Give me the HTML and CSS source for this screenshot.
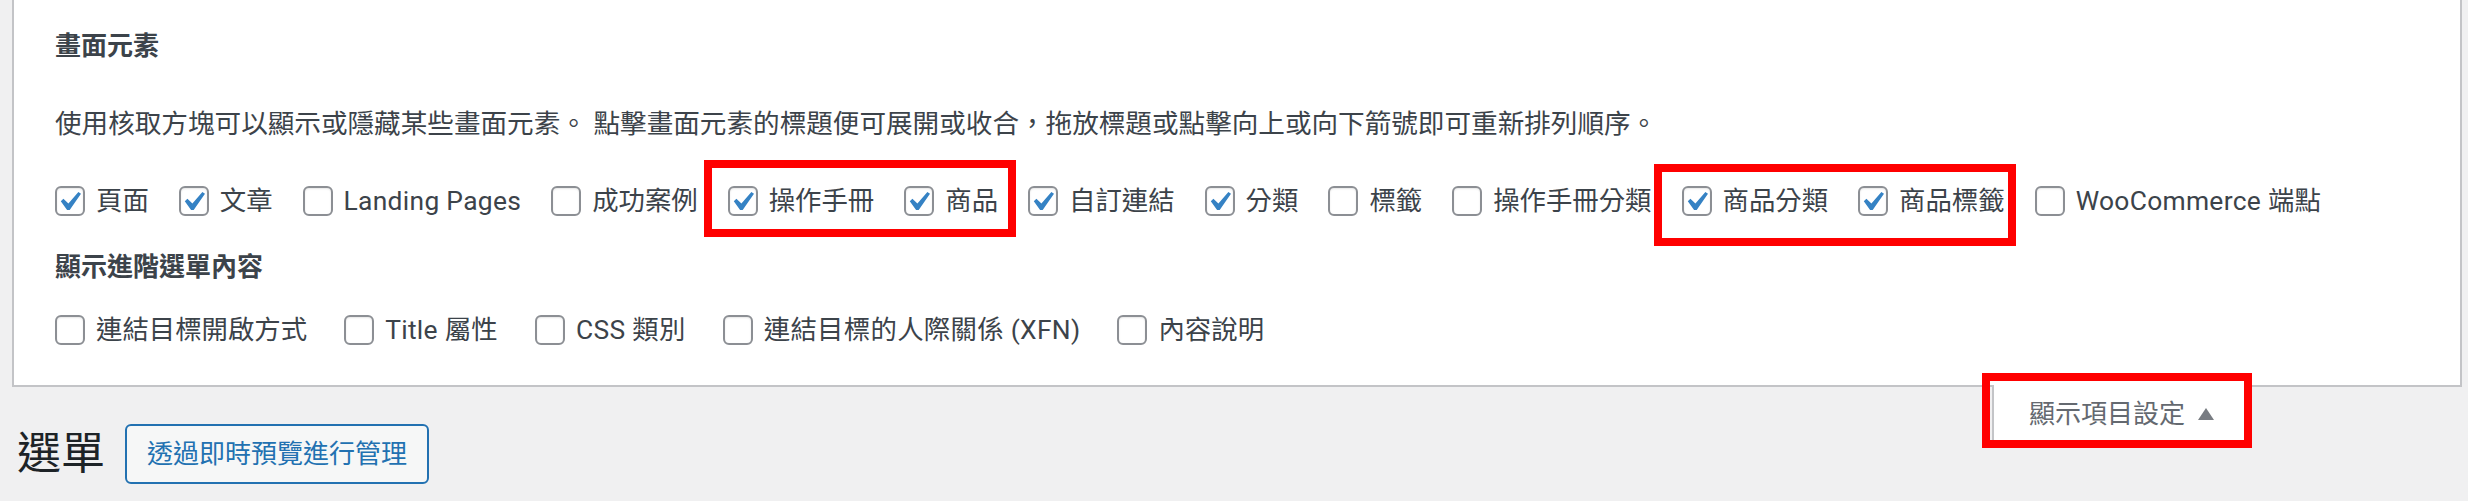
FILE: index.html
```html
<!DOCTYPE html>
<html lang="zh-Hant">
<head>
    <meta charset="UTF-8">
    <meta name="viewport" content="width=device-width, initial-scale=1.0">
    <title>選單</title>
    <link rel="stylesheet" href="styles.css">
</head>
<body>
<div class="screen-meta">
    <h5 class="prefs-title">畫面元素</h5>
    <p class="prefs-desc">使用核取方塊可以顯示或隱藏某些畫面元素。 點擊畫面元素的標題便可展開或收合，拖放標題或點擊向上或向下箭號即可重新排列順序。</p>
    <div class="prefs-row">
        <label class="pref"><span class="box checked"><svg viewBox="3.83 2.88 13.37 13.37"><path d="M14.83 4.89l1.34.94-5.81 8.38H9.02L5.78 9.67l1.34-1.25 2.57 2.4z"/></svg></span>頁面</label>
        <label class="pref"><span class="box checked"><svg viewBox="3.83 2.88 13.37 13.37"><path d="M14.83 4.89l1.34.94-5.81 8.38H9.02L5.78 9.67l1.34-1.25 2.57 2.4z"/></svg></span>文章</label>
        <label class="pref latin"><span class="box"></span>Landing Pages</label>
        <label class="pref"><span class="box"></span>成功案例</label>
        <label class="pref"><span class="box checked"><svg viewBox="3.83 2.88 13.37 13.37"><path d="M14.83 4.89l1.34.94-5.81 8.38H9.02L5.78 9.67l1.34-1.25 2.57 2.4z"/></svg></span>操作手冊</label>
        <label class="pref"><span class="box checked"><svg viewBox="3.83 2.88 13.37 13.37"><path d="M14.83 4.89l1.34.94-5.81 8.38H9.02L5.78 9.67l1.34-1.25 2.57 2.4z"/></svg></span>商品</label>
        <label class="pref"><span class="box checked"><svg viewBox="3.83 2.88 13.37 13.37"><path d="M14.83 4.89l1.34.94-5.81 8.38H9.02L5.78 9.67l1.34-1.25 2.57 2.4z"/></svg></span>自訂連結</label>
        <label class="pref"><span class="box checked"><svg viewBox="3.83 2.88 13.37 13.37"><path d="M14.83 4.89l1.34.94-5.81 8.38H9.02L5.78 9.67l1.34-1.25 2.57 2.4z"/></svg></span>分類</label>
        <label class="pref"><span class="box"></span>標籤</label>
        <label class="pref"><span class="box"></span>操作手冊分類</label>
        <label class="pref"><span class="box checked"><svg viewBox="3.83 2.88 13.37 13.37"><path d="M14.83 4.89l1.34.94-5.81 8.38H9.02L5.78 9.67l1.34-1.25 2.57 2.4z"/></svg></span>商品分類</label>
        <label class="pref"><span class="box checked"><svg viewBox="3.83 2.88 13.37 13.37"><path d="M14.83 4.89l1.34.94-5.81 8.38H9.02L5.78 9.67l1.34-1.25 2.57 2.4z"/></svg></span>商品標籤</label>
        <label class="pref latin"><span class="box"></span>WooCommerce 端點</label>
    </div>
    <h5 class="prefs-title sub">顯示進階選單內容</h5>
    <div class="prefs-row advanced">
        <label class="pref"><span class="box"></span>連結目標開啟方式</label>
        <label class="pref latin"><span class="box"></span>Title 屬性</label>
        <label class="pref latin"><span class="box"></span>CSS 類別</label>
        <label class="pref latin"><span class="box"></span>連結目標的人際關係 (XFN)</label>
        <label class="pref"><span class="box"></span>內容說明</label>
    </div>
</div>

<div class="meta-links">
    <button class="show-settings" type="button">顯示項目設定<span class="arrow"></span></button>
</div>

<div class="wrap">
    <h1>選單</h1>
    <a class="page-action" href="#">透過即時預覽進行管理</a>
</div>

<!-- highlight marks -->
<div class="mark mark-manual"></div>
<div class="mark mark-product"></div>
<div class="mark mark-settings"></div>
</body>
</html>
```

FILE: styles.css
```css
body {
    margin: 0;
    background-color: #f0f0f1;
    font-family: Roboto, "Noto Sans CJK TC", sans-serif;
    font-size: 26px;
    color: #3c434a;
}

.screen-meta {
    margin: 0 6px 0 12px;
    padding: 28px 20px 37px 41px;
    background: #ffffff;
    border: 2px solid #c3c4c7;
    border-top: 0;
}

.prefs-title {
    margin: 0;
    font-size: 26px;
    line-height: 36px;
    font-weight: 600;
    color: #3c434a;
}
.prefs-title.sub {
    margin-top: 30px;
}

.prefs-desc {
    margin: 42px 0 0;
    font-size: 26.6px;
    line-height: 36px;
}

.prefs-row {
    display: flex;
    align-items: center;
    gap: 30px;
    margin-top: 41px;
    font-size: 26.4px;
    white-space: nowrap;
}
.prefs-row.advanced {
    gap: 37px;
    margin-top: 27px;
}

.pref {
    display: flex;
    align-items: center;
    gap: 11px;
    line-height: 36px;
}
.pref.latin {
    letter-spacing: 0.3px;
}

.box {
    display: block;
    width: 30px;
    height: 30px;
    box-sizing: border-box;
    border: 2px solid #8c8f94;
    border-radius: 6px;
    background: #ffffff;
    box-shadow: inset 0 1px 2px rgba(0, 0, 0, 0.1);
}
.box svg {
    display: block;
    width: 26px;
    height: 26px;
    fill: #3582c4;
}

.meta-links {
    float: right;
    margin: -2px 220px 0 0;
}
.show-settings {
    display: flex;
    align-items: center;
    gap: 13px;
    margin: 0;
    padding: 11px 32px 14px 35px;
    font-family: inherit;
    font-size: 26px;
    line-height: 36px;
    color: #646970;
    background: #ffffff;
    border: 2px solid #c3c4c7;
    border-top: none;
    border-radius: 0 0 6px 6px;
}
.arrow {
    width: 0;
    height: 0;
    border-left: 8px solid transparent;
    border-right: 8px solid transparent;
    border-bottom: 12px solid #787c82;
}

.wrap {
    display: flex;
    align-items: center;
    padding: 37px 0 0 17px;
}
.wrap h1 {
    margin: 0;
    font-size: 44px;
    font-weight: 400;
    line-height: 60px;
    color: #1d2327;
}
.page-action {
    display: block;
    margin-left: 20px;
    height: 60px;
    box-sizing: border-box;
    padding: 0 20px;
    line-height: 56px;
    color: #2271b1;
    background: #f6f7f7;
    border: 2px solid #2271b1;
    border-radius: 6px;
    text-decoration: none;
}

.mark {
    position: absolute;
    box-sizing: border-box;
    border: 8px solid #ff0000;
}
.mark-manual {
    left: 704px;
    top: 160px;
    width: 312px;
    height: 77px;
}
.mark-product {
    left: 1654px;
    top: 164px;
    width: 362px;
    height: 82px;
}
.mark-settings {
    left: 1982px;
    top: 373px;
    width: 270px;
    height: 75px;
}
```
